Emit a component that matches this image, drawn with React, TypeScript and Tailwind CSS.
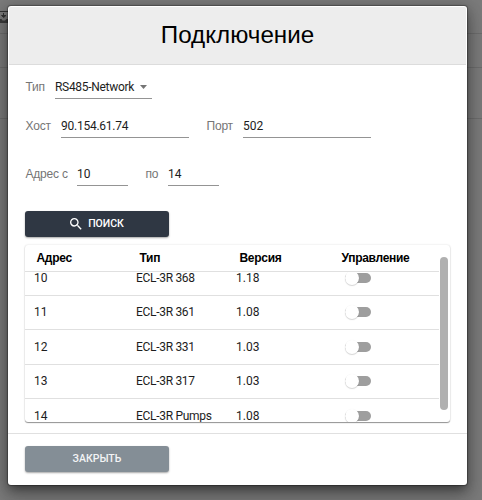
import React, { useState } from 'react';
import { clsx } from 'clsx';

interface Device {
  address: number;
  type: string;
  version: string;
}

const devices: Device[] = [
  { address: 10, type: 'ECL-3R 368', version: '1.18' },
  { address: 11, type: 'ECL-3R 361', version: '1.08' },
  { address: 12, type: 'ECL-3R 331', version: '1.03' },
  { address: 13, type: 'ECL-3R 317', version: '1.03' },
  { address: 14, type: 'ECL-3R Pumps', version: '1.08' },
];

const Field: React.FC<{
  label: string;
  value: string;
  labelClass: string;
  inputClass: string;
}> = ({ label, value, labelClass, inputClass }) => {
  const [text, setText] = useState(value);

  return (
    <label className="flex h-[22px] items-start">
      <span
        className={clsx(
          "shrink-0 pl-[0.5px] font-['Liberation_Sans',sans-serif] leading-[18px] tracking-[-0.2px] whitespace-nowrap text-[#757575]",
          labelClass
        )}
      >
        {label}
      </span>
      <input
        value={text}
        onChange={(e) => setText(e.target.value)}
        className={clsx(
          'h-[21px] border-b border-[#949494] pb-[2px] leading-[18px] text-[#1d1d1d] outline-none',
          inputClass
        )}
      />
    </label>
  );
};

const Toggle: React.FC = () => {
  const [on, setOn] = useState(false);

  return (
    <button
      role="switch"
      aria-checked={on}
      onClick={() => setOn(!on)}
      className="flex h-[14px] w-[26px] items-center"
    >
      <span
        className={clsx(
          'flex h-[10px] w-[26px] items-center rounded-full',
          on ? 'justify-end bg-[#2f3947]/60' : 'bg-[#9e9e9e]'
        )}
      >
        <span className="h-[14px] w-[14px] shrink-0 rounded-full bg-white shadow-[0_1px_1px_rgba(0,0,0,0.16),0_0_1px_rgba(0,0,0,0.06)]" />
      </span>
    </button>
  );
};

const DeviceTable: React.FC = () => (
  <div className="relative h-[177px] w-[425px] overflow-hidden rounded-[3px] bg-white shadow-[0_1px_1px_rgba(0,0,0,0.4),0_0_2px_rgba(0,0,0,0.16)]">
    <div className="flex h-[27px] w-[414px] items-center border-b border-[#e0e0e0] pl-[11.5px] font-['Liberation_Sans',sans-serif] font-bold tracking-[-0.3px] text-black">
      <span className="w-[103px]">Адрес</span>
      <span className="w-[100px]">Тип</span>
      <span className="w-[102px]">Версия</span>
      <span>Управление</span>
    </div>
    <div className="h-[150px] w-[414px] overflow-hidden">
      <div className="-mt-[11px]">
        {devices.map((device) => (
          <div
            key={device.address}
            className="flex h-[34.5px] items-center border-b border-[#e0e0e0] pl-[9px] text-[#1d1d1d]"
          >
            <span className="w-[102px]">{device.address}</span>
            <span className="w-[100px] tracking-[-0.3px]">{device.type}</span>
            <span className="w-[109px]">{device.version}</span>
            <Toggle />
          </div>
        ))}
      </div>
    </div>
    <div className="absolute top-[12px] right-[2px] h-[153px] w-[8px] rounded-full bg-[#b0b0b0]" />
  </div>
);

const App: React.FC = () => {
  return (
    <div className="relative h-[500px] w-[482px] overflow-hidden bg-[#7a7a7a] font-['Roboto','Liberation_Sans',sans-serif] text-[12px]">
      <div className="h-[34px] border-b border-[#6c6c6c]" />
      <div className="h-[34px] border-b border-[#6c6c6c]" />
      <div className="h-[51px] border-b border-[#6c6c6c]" />
      <svg className="absolute top-[11px] left-0" width="9" height="12" viewBox="0 0 9 12" fill="none">
        <path d="M0 .5h9" stroke="#333" />
        <path d="M0 8h1.5l1 1.5h2.5L6.5 8H9v4H0z" fill="#3c3c3c" />
        <path d="M3.5 2v3M1.5 4.5l2.2 2 2.2-2z" fill="#333" stroke="#333" strokeWidth="1" />
      </svg>

      <div className="absolute top-[6px] left-[8px] flex h-[479px] w-[459px] flex-col rounded-[3px] bg-white shadow-[0_6px_9px_-3px_rgba(0,0,0,0.35),0_12px_20px_2px_rgba(0,0,0,0.2),0_2px_12px_4px_rgba(0,0,0,0.14),0_0_1px_1px_rgba(0,0,0,0.3)]">
        <header className="mx-px mt-px flex h-[58px] shrink-0 justify-center rounded-t-[2px] border-b border-[#dcdcdc] bg-[#ededed] pt-[13px]">
          <h1 className="font-['Liberation_Sans',sans-serif] text-[24.2px] leading-[30px] text-black">Подключение</h1>
        </header>

        <main className="flex h-[362px] shrink-0 flex-col pl-[17px]">
          <div className="mt-[13px] flex h-[21px] items-start">
            <span className="w-[30px] pl-[0.5px] font-['Liberation_Sans',sans-serif] leading-[18px] tracking-[-0.2px] text-[#757575]">
              Тип
            </span>
            <button className="flex h-[21px] w-[97px] items-start justify-between border-b border-[#949494] pr-[5px] leading-[18px] tracking-[-0.3px] text-[#1d1d1d]">
              RS485-Network
              <svg className="mt-[7px]" width="7" height="4" viewBox="0 0 7 4">
                <path d="M0 0h7L3.5 4z" fill="#757575" />
              </svg>
            </button>
          </div>

          <div className="mt-[18px] flex gap-[17px]">
            <Field
              label="Хост"
              value="90.154.61.74"
              labelClass="w-[36px]"
              inputClass="w-[128px] tracking-[-0.25px]"
            />
            <Field label="Порт" value="502" labelClass="w-[37px]" inputClass="w-[128px]" />
          </div>

          <div className="mt-[26px] flex gap-[17px]">
            <Field label="Адрес с" value="10" labelClass="w-[52px]" inputClass="w-[51px]" />
            <Field label="по" value="14" labelClass="w-[23px]" inputClass="w-[51px]" />
          </div>

          <button className="mt-[24px] flex h-[26px] w-[144px] shrink-0 items-center justify-center gap-[6px] rounded-[3px] bg-[#2f3743] text-[10.5px] font-medium text-white shadow-[0_1px_2px_rgba(0,0,0,0.35)]">
            <svg width="12" height="12" viewBox="3 3 18 18" fill="currentColor">
              <path d="M15.5 14h-.79l-.28-.27A6.47 6.47 0 0 0 16 9.5 6.5 6.5 0 1 0 9.5 16c1.61 0 3.09-.59 4.23-1.57l.27.28v.79l5 4.99L20.49 19l-4.99-5zm-6 0C7.01 14 5 11.99 5 9.5S7.01 5 9.5 5 14 7.01 14 9.5 11.99 14 9.5 14z" />
            </svg>
            ПОИСК
          </button>

          <div className="mt-[8px]">
            <DeviceTable />
          </div>
        </main>

        <footer className="mt-[6px] flex-1 border-t border-[#e0e0e0] pt-[12px] pl-[17px]">
          <button className="flex h-[26px] w-[144px] items-center justify-center rounded-[3px] bg-[#848e96] text-[10.5px] font-medium text-[#f3f4f5] shadow-[0_1px_2px_rgba(0,0,0,0.35)]">
            ЗАКРЫТЬ
          </button>
        </footer>
      </div>
    </div>
  );
};

export default App;
